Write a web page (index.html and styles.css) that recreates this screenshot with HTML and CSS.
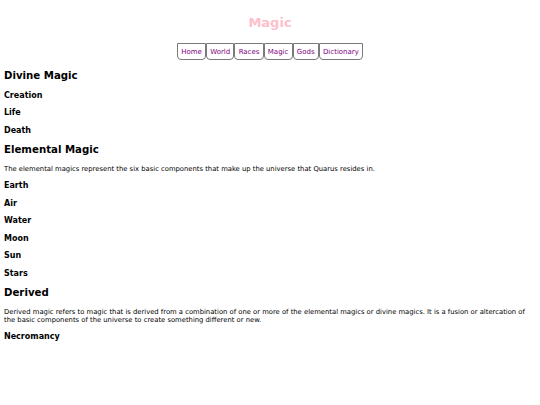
FILE: index.html
```html
<!DOCTYPE html>
<html>
<head>
<meta charset="utf-8">
<title>Magic</title>
<link rel="stylesheet" href="styles.css">
</head>
<body>
<h1 class="title">Magic</h1>
<nav class="nav">
  <ul class="nav-list">
    <li class="nav-item"><a href="#">Home</a></li>
    <li class="nav-item"><a href="#">World</a></li>
    <li class="nav-item"><a href="#">Races</a></li>
    <li class="nav-item"><a href="#">Magic</a></li>
    <li class="nav-item"><a href="#">Gods</a></li>
    <li class="nav-item"><a href="#">Dictionary</a></li>
  </ul>
</nav>
<h2 class="section">Divine Magic</h2>
<h3 class="item">Creation</h3>
<h3 class="item">Life</h3>
<h3 class="item">Death</h3>
<h2 class="section">Elemental Magic</h2>
<p class="text">The elemental magics represent the six basic components that make up the universe that Quarus resides in.</p>
<h3 class="item">Earth</h3>
<h3 class="item">Air</h3>
<h3 class="item">Water</h3>
<h3 class="item">Moon</h3>
<h3 class="item">Sun</h3>
<h3 class="item">Stars</h3>
<h2 class="section">Derived</h2>
<p class="text">Derived magic refers to magic that is derived from a combination of one or more of the elemental magics or divine magics. It is a fusion or altercation of the basic components of the universe to create something different or new.</p>
<h3 class="item">Necromancy</h3>
</body>
</html>
```
FILE: styles.css
```css
html, body {
  background: #ffffff;
}
body {
  margin: 0;
  padding: 0 4px;
  font-family: "DejaVu Sans", Verdana, sans-serif;
  color: #000000;
}
.title {
  font-size: 13px;
  line-height: 15px;
  color: #ffc0cb;
  text-align: center;
  margin: 15px 0 13px;
}
.nav {
  display: flex;
  justify-content: center;
  margin-bottom: 8.5px;
}
.nav-list {
  list-style: none;
  margin: 0;
  padding: 0;
  display: flex;
}
.nav-item {
  border: 1px solid #7a7a7a;
  border-radius: 0 0 4px 4px;
  height: 15px;
  padding: 0 3.2px;
  display: flex;
  align-items: center;
  font-size: 7px;
}
.nav-item a {
  color: #800080;
  text-decoration: none;
}
.section {
  font-size: 10.2px;
  line-height: 14px;
  margin: 7.5px 0 8px;
}
.item {
  font-size: 8px;
  line-height: 10px;
  margin: 7.5px 0;
}
.text {
  font-size: 6.8px;
  line-height: 8px;
  margin: 8px 0;
}
```
